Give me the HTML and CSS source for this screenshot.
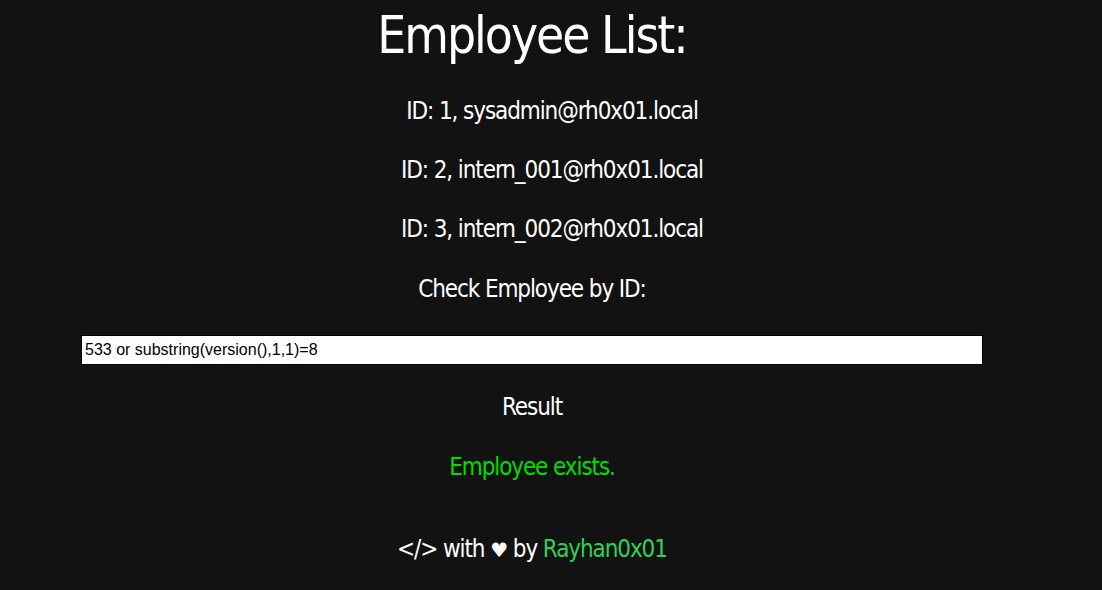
FILE: index.html
```html
<!DOCTYPE html>
<html lang="en">
<head>
<meta charset="utf-8">
<title>Employee List</title>
<link rel="stylesheet" href="styles.css">
</head>
<body>
<div class="page">
  <h1 class="title">Employee List:</h1>
  <ul class="employees">
    <li class="line">ID: 1, sysadmin@rh0x01.local</li>
    <li class="line">ID: 2, intern_001@rh0x01.local</li>
    <li class="line">ID: 3, intern_002@rh0x01.local</li>
  </ul>
  <p class="line check">Check Employee by ID:</p>
  <input class="id-input" type="text" value="533 or substring(version(),1,1)=8">
  <p class="line result">Result</p>
  <p class="line status">Employee exists.</p>
  <footer class="line footer">&lt;/&gt; with <span class="heart">&#9829;</span> by <a class="author" href="#">Rayhan0x01</a></footer>
</div>
</body>
</html>
```

FILE: styles.css
```css
html, body {
  margin: 0;
  padding: 0;
  background: #121212;
}

body {
  font-family: "DejaVu Sans Condensed", "DejaVu Sans", sans-serif;
  color: #ffffff;
}

.page {
  width: 1064px;
  padding-top: 6px;
  display: flex;
  flex-direction: column;
  align-items: center;
}

.title {
  margin: 0;
  font-size: 51px;
  line-height: 60px;
  letter-spacing: -2px;
  font-weight: normal;
  text-align: center;
}

.employees {
  list-style: none;
  margin: 30px 0 0 0;
  padding: 0 0 0 40px;
  align-self: stretch;
  display: flex;
  flex-direction: column;
  align-items: center;
  gap: 29px;
}

.line {
  font-size: 24px;
  line-height: 30px;
  letter-spacing: -1.1px;
  text-align: center;
  margin: 0;
}

.check {
  margin-top: 30px;
}

.id-input {
  margin-top: 31px;
  box-sizing: border-box;
  width: 902px;
  height: 30px;
  padding: 0 3px;
  border: 1px solid #000;
  background: #fff;
  color: #000;
  font-family: "Liberation Sans", Arial, sans-serif;
  font-size: 16px;
  outline: none;
}

.result {
  margin-top: 27px;
}

.status {
  margin-top: 30px;
  color: #00dd00;
}

.footer {
  margin-top: 52px;
}

.heart {
  font-family: "DejaVu Sans", sans-serif;
  font-size: 20px;
}

.author {
  color: #2ed158;
  text-decoration: none;
}
```
